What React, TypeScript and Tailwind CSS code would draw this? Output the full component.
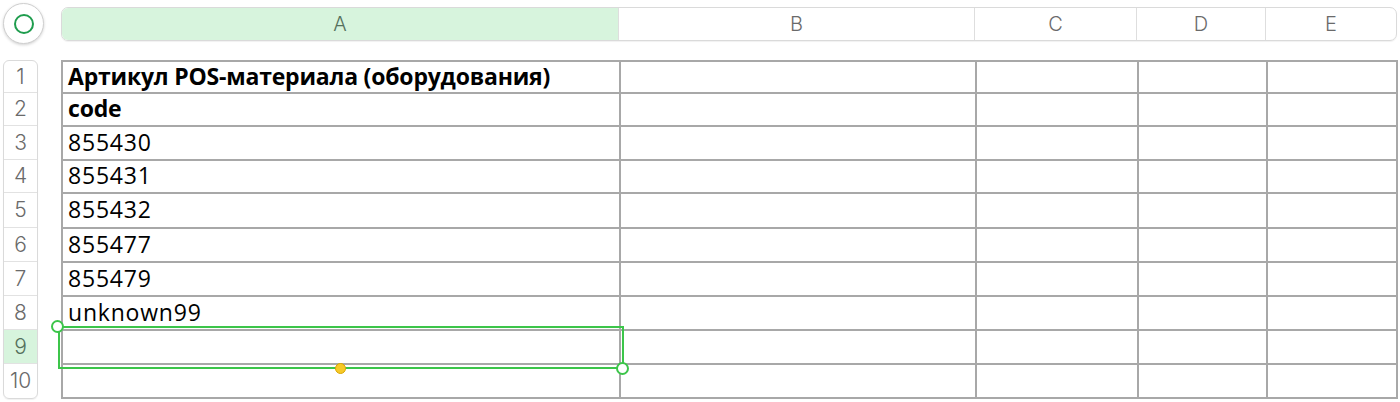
import React from "react";

const cols = [
  { label: "A", w: "w-[558px]" },
  { label: "B", w: "w-[356px]" },
  { label: "C", w: "w-[162px]" },
  { label: "D", w: "w-[129px]" },
  { label: "E", w: "w-[130px]" },
];

const rowHeights = [
  "h-[32px]",
  "h-[33px]",
  "h-[34px]",
  "h-[33px]",
  "h-[35px]",
  "h-[34px]",
  "h-[34px]",
  "h-[34px]",
  "h-[34px]",
  "h-[34px]",
];

const values: { text: string; bold?: boolean }[] = [
  { text: "Артикул POS-материала (оборудования)", bold: true },
  { text: "code", bold: true },
  { text: "855430" },
  { text: "855431" },
  { text: "855432" },
  { text: "855477" },
  { text: "855479" },
  { text: "unknown99" },
  { text: "" },
  { text: "" },
];

export default function App() {
  return (
    <div className="relative w-[1400px] h-[402px] bg-white overflow-hidden font-['Open_Sans',sans-serif]">
      {/* top: corner button + column headers */}
      <div className="flex items-center h-[46px] pt-[1px]">
        <div className="ml-[3px] w-[41px] h-[41px] rounded-full border border-[#cfcfcf] bg-white shadow-[0_1px_3px_rgba(0,0,0,0.18)] flex items-center justify-center">
          <div className="w-[20px] h-[20px] rounded-full border-2 border-[#1f9d4e]" />
        </div>
        <div className="ml-[17px] flex h-[34px] w-[1336px] rounded-[7px] border border-[#dadada] overflow-hidden shadow-[0_1px_1px_rgba(0,0,0,0.06)] font-['Inter',sans-serif] font-light text-[20px] text-[#6a6a6a]">
          {cols.map((c, i) => (
            <div
              key={c.label}
              className={`${i === 0 ? "w-[557px] bg-[#d7f4dd] text-[#55705c]" : i === 1 ? "w-[356px]" : i === 2 ? "w-[162px]" : i === 3 ? "w-[129px]" : "flex-1"} ${i < 4 ? "border-r border-[#dedede]" : ""} flex items-center justify-center`}
            >
              {c.label}
            </div>
          ))}
        </div>
      </div>

      {/* body */}
      <div className="flex mt-[14px]">
        {/* row headers */}
        <div className="ml-[3px] w-[35px] rounded-[6px] border border-[#dadada] overflow-hidden shadow-[0_1px_1px_rgba(0,0,0,0.06)] font-['Inter',sans-serif] font-light text-[21px] text-[#6a6a6a] self-start">
          {rowHeights.map((h, i) => (
            <div
              key={i}
              className={`${h} ${i < 9 ? "border-b border-[#e2e2e2]" : ""} ${i === 8 ? "bg-[#d7f4dd] text-[#55705c]" : ""} flex items-center justify-center`}
            >
              {i + 1}
            </div>
          ))}
        </div>

        {/* grid */}
        <div className="ml-[23px] border-l-2 border-t-2 border-[#a8a8a8] self-start">
          {rowHeights.map((h, r) => (
            <div key={r} className={`flex ${h}`}>
              {cols.map((c, ci) => (
                <div
                  key={c.label}
                  className={`${c.w} h-full border-r-2 border-b-2 border-[#a8a8a8] flex items-center pl-[5px] pb-[3px] text-[23px] leading-[26px] text-black whitespace-nowrap ${ci === 0 && values[r].bold ? "font-bold tracking-[-0.2px]" : "tracking-[0.8px]"}`}
                >
                  {ci === 0 ? values[r].text : ""}
                </div>
              ))}
            </div>
          ))}
        </div>
      </div>

      {/* selection overlay */}
      <div className="absolute left-[58px] top-[326px] w-[566px] h-[43px] border-2 border-[#3cc54a] pointer-events-none" />
      <div className="absolute left-[51px] top-[320px] w-[13px] h-[13px] rounded-full border-2 border-[#3cc54a] bg-white" />
      <div className="absolute left-[616px] top-[362px] w-[13px] h-[13px] rounded-full border-2 border-[#3cc54a] bg-white" />
      <div className="absolute left-[335px] top-[363px] w-[11px] h-[11px] rounded-full border border-[#d9a600] bg-[#f7c928]" />
    </div>
  );
}
